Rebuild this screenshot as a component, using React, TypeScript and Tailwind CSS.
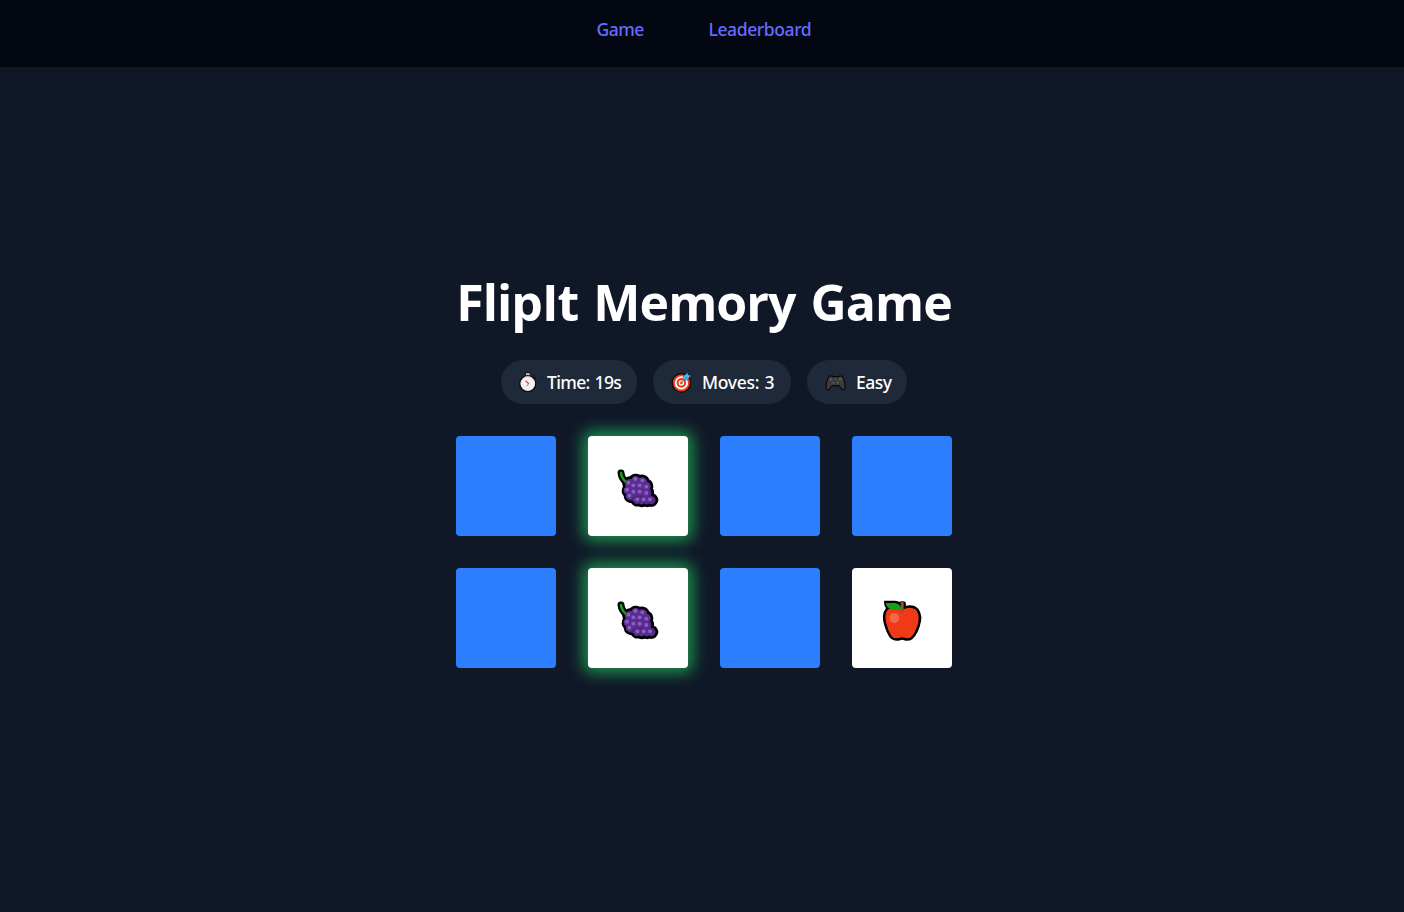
import type { ReactNode } from "react";

function Stopwatch() {
  return (
    <svg className="size-6 shrink-0" viewBox="0 0 24 24">
      <path d="M8.4 2.6h4.8v4h-4.8z" fill="#bdbdbd" stroke="#0a0a0a" strokeWidth="1" />
      <path d="M16.6 5.2l2 1.9-1.2 1.6-2-1.8z" fill="#333" stroke="#0a0a0a" strokeWidth="1" />
      <circle cx="10.8" cy="13.6" r="8" fill="#f2f2f2" stroke="#0a0a0a" strokeWidth="1.4" />
      <circle cx="10.8" cy="13.6" r="6.9" fill="none" stroke="#d4d4d4" strokeWidth="0.6" />
      <path d="M8.6 10.8l3.2 2.9" fill="none" stroke="#e63946" strokeWidth="1.3" />
      <path d="M11.8 13.7l-2.2 2.4" fill="none" stroke="#777" strokeWidth="1" />
    </svg>
  );
}

function Target() {
  return (
    <svg className="size-6 shrink-0" viewBox="0 0 24 24">
      <circle cx="12.4" cy="12.9" r="9.2" fill="#f03a17" stroke="#0a0a0a" strokeWidth="1.3" />
      <circle cx="12.4" cy="12.9" r="5.7" fill="none" stroke="#fff" strokeWidth="1.8" />
      <circle cx="12.4" cy="12.9" r="2" fill="none" stroke="#fff" strokeWidth="1.4" />
      <path d="M14 9.9l.3-3.4 4.2-3.7.7 2.2 2.7.5-3.9 4.6-3.4.4z" fill="#35bdf7" stroke="#0a3550" strokeWidth="0.3" />
      <path d="M12.4 12.9l5.2-6.1" stroke="#4f7180" strokeWidth="0.8" />
    </svg>
  );
}

function Gamepad() {
  return (
    <svg className="size-6 shrink-0" viewBox="0 0 24 24">
      <path
        d="M6.3 6.2C7.6 5.6 9 6 9.8 6.6h5.6c1-.8 2.3-1 3.5-.4 1.7.8 3.2 7.2 3.3 11.3 0 2.5-2.2 3.2-3.5 1.6l-2.8-3.5H9.3l-2.8 3.5C5.2 20.7 3 20 3 17.5 3.1 13.4 4.6 7 6.3 6.2z"
        fill="#3b3b3b"
        stroke="#0a0a0a"
        strokeWidth="1.2"
      />
      <circle cx="7.7" cy="9.3" r="0.9" fill="#757575" />
      <circle cx="10.4" cy="12.6" r="0.9" fill="#656565" />
      <circle cx="14.8" cy="12.6" r="0.9" fill="#656565" />
      <circle cx="12.5" cy="8.7" r="0.7" fill="#777" />
      <circle cx="17.5" cy="7.9" r="0.5" fill="#8d7424" />
      <circle cx="16.2" cy="9.3" r="0.7" fill="#1689c9" />
      <circle cx="18.9" cy="9.3" r="0.7" fill="#e5482d" />
      <circle cx="17.5" cy="10.7" r="0.5" fill="#2a6a2a" />
    </svg>
  );
}

const berries = [
  [82, 69], [103, 73], [61, 80], [76, 88], [95, 88], [115, 92], [57, 101],
  [76, 107], [95, 107], [115, 111], [64, 119], [88, 130], [107, 130], [126, 130],
];

function Grapes() {
  const body =
    "M53 78C56 69 65 68 70 70C74 60 89 58 94 66C103 61 116 65 117 77C127 79 131 91 126 99C131 105 132 114 128 120C139 118 147 131 140 139C136 146 128 146 124 142C119 147 113 146 109 142C103 147 97 146 93 142C86 146 77 142 75 134C63 135 53 127 56 117C47 111 47 100 54 94C51 88 50 83 53 78Z";
  return (
    <svg className="size-[60px]" viewBox="0 0 180 180">
      <path d="M39 51C40 63 47 74 60 83" fill="none" stroke="#000" strokeWidth="21" strokeLinecap="round" />
      <path d={body} fill="#000" stroke="#000" strokeWidth="16" strokeLinejoin="round" />
      <path d={body} fill="#5c2e91" />
      <path d="M52 97C55 109 62 109 68 121C80 125 96 113 107 120C119 117 119 103 124 98C130 109 130 113 127 120C137 119 141 129 136 137C122 143 87 143 77 132C64 134 57 128 57 116C48 111 48 104 52 97Z" fill="#4c257c" />
      <path d="M39 51C40 63 47 73 58 82" fill="none" stroke="#16a016" strokeWidth="8" strokeLinecap="round" />
      {berries.map(([x, y]) => (
        <g key={`${x}-${y}`}>
          <circle cx={x} cy={y + 2} r="10" fill="#5c2e91" />
          <circle cx={x} cy={y} r="5.7" fill="#8661c1" />
        </g>
      ))}
    </svg>
  );
}

function Apple() {
  const body =
    "M89 67C75 57 56 56 47 66C38 77 39 96 45 113C50 129 58 149 68 150C77 153 84 148 90 148C97 148 104 153 112 150C122 147 130 131 136 114C142 96 141 77 133 67C123 56 104 57 89 67Z";
  return (
    <svg className="size-[60px]" viewBox="0 0 180 180">
      <g fill="#000" stroke="#000" strokeWidth="15">
        <path d={body} strokeLinejoin="round" />
        <path d="M44 46H68C80 46 86 54 88 63C70 67 45 64 44 46Z" />
        <path d="M88 47h6v20h-6z" strokeLinejoin="round" />
      </g>
      <path d={body} fill="#f03a17" />
      <path d="M86 42h9v31h-9z" fill="#8e562e" />
      <path d="M42 45H68C80 46 87 54 88 65C64 67 43 64 42 45Z" fill="#16a016" />
      <circle cx="67" cy="90" r="15" fill="#f3694c" />
    </svg>
  );
}

function Stat({ icon, children, className }: { icon: ReactNode; children: ReactNode; className: string }) {
  return (
    <div className={`flex h-11 items-center rounded-full bg-[#1e2939] pl-4 text-[17.5px] font-medium whitespace-nowrap text-white ${className}`}>
      {icon}
      {children}
    </div>
  );
}

type CardState = { fruit?: "grapes" | "apple"; matched?: boolean };

const cards: CardState[] = [
  {}, { fruit: "grapes", matched: true }, {}, {},
  {}, { fruit: "grapes", matched: true }, {}, { fruit: "apple" },
];

function Card({ fruit, matched }: CardState) {
  return (
    <div
      className={`flex size-[100px] items-center justify-center rounded-sm ${fruit ? "bg-white" : "bg-[#2b7fff]"} ${
        matched ? "shadow-[0_0_15px_5px_rgba(34,197,94,0.7)]" : ""
      }`}
    >
      {fruit === "grapes" && <Grapes />}
      {fruit === "apple" && <Apple />}
    </div>
  );
}

export default function App() {
  return (
    <div className="flex h-[912px] flex-col overflow-hidden bg-[#101828] font-['Noto_Sans','Open_Sans',sans-serif]">
      <nav className="flex h-[67px] shrink-0 justify-center gap-16 bg-[#030712] pt-[15px] pl-1 text-[17.5px] leading-7 font-medium text-[#646cff]">
        <a className="w-12 whitespace-nowrap tracking-[-0.5px]">Game</a>
        <a className="w-[103px] whitespace-nowrap tracking-[-0.4px]">Leaderboard</a>
      </nav>
      <main className="flex flex-col items-center pt-[207px] pl-1">
        <h1 className="flex h-14 w-[496px] items-center justify-center font-['Open_Sans','Noto_Sans',sans-serif] text-[50px] leading-[56px] font-bold tracking-[-0.95px] [word-spacing:3px] whitespace-nowrap text-white">
          FlipIt Memory Game
        </h1>
        <div className="mt-[30px] flex gap-4">
          <Stat icon={<Stopwatch />} className="w-[136px]">
            <span className="ml-1.5 tracking-[-0.65px] [word-spacing:1px]">Time: 19s</span>
          </Stat>
          <Stat icon={<Target />} className="w-[138px]">
            <span className="ml-[9px] tracking-[-0.3px] [word-spacing:1px]">Moves: 3</span>
          </Stat>
          <Stat icon={<Gamepad />} className="w-[100px]">
            <span className="ml-[9px] tracking-[-0.5px]">Easy</span>
          </Stat>
        </div>
        <div className="mt-8 grid grid-cols-4 gap-8">
          {cards.map((card, i) => (
            <Card key={i} {...card} />
          ))}
        </div>
      </main>
    </div>
  );
}
